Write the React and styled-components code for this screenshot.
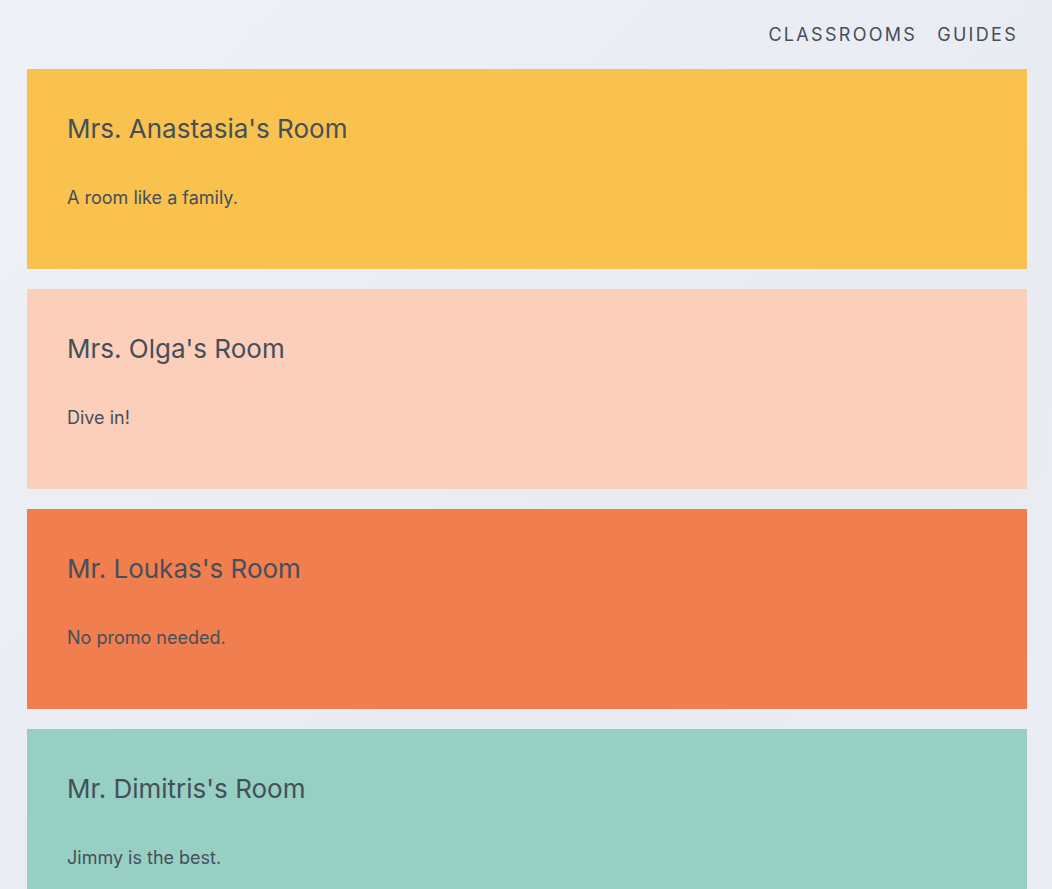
import React from "react";
import styled, { createGlobalStyle } from "styled-components";

const GlobalStyle = createGlobalStyle`
  html, body {
    margin: 0;
    padding: 0;
  }
  body {
    font-family: Inter, "Noto Sans", sans-serif;
    color: #444f5a;
    background: linear-gradient(135deg, #eef2f7 0%, #e8ecf2 60%, #eaeef4 100%);
    min-height: 100vh;
  }
`;

const rooms = [
  { name: "Mrs. Anastasia's Room", motto: "A room like a family.", color: "#f9c24e" },
  { name: "Mrs. Olga's Room", motto: "Dive in!", color: "#fbcfb9" },
  { name: "Mr. Loukas's Room", motto: "No promo needed.", color: "#f07e4f" },
  { name: "Mr. Dimitris's Room", motto: "Jimmy is the best.", color: "#97cfc2" },
];

export default function App() {
  return (
    <Page>
      <GlobalStyle />
      <Nav>
        <NavLink href="#">Classrooms</NavLink>
        <NavLink href="#">Guides</NavLink>
      </Nav>
      <List>
        {rooms.map((room) => (
          <Card key={room.name} $bg={room.color}>
            <Title>{room.name}</Title>
            <Motto>{room.motto}</Motto>
          </Card>
        ))}
      </List>
    </Page>
  );
}

const Page = styled.div`
  min-height: 100vh;
  padding: 0 25px 0 27px;
`;

const Nav = styled.nav`
  height: 69px;
  display: flex;
  align-items: center;
  justify-content: flex-end;
  gap: 20px;
  padding: 0 9px 0 0;
  box-sizing: border-box;
`;

const NavLink = styled.a`
  color: #444f5a;
  text-decoration: none;
  text-transform: uppercase;
  font-size: 18px;
  letter-spacing: 2.3px;
`;

const List = styled.main`
  display: flex;
  flex-direction: column;
  gap: 20px;
`;

const Card = styled.section`
  background: ${({ $bg }) => $bg};
  height: 200px;
  box-sizing: border-box;
  padding: 44px 40px 0;
`;

const Title = styled.h2`
  margin: 0;
  font-size: 26px;
  font-weight: 400;
  line-height: 32px;
`;

const Motto = styled.p`
  margin: 40px 0 0;
  font-size: 18px;
  line-height: 26px;
`;
